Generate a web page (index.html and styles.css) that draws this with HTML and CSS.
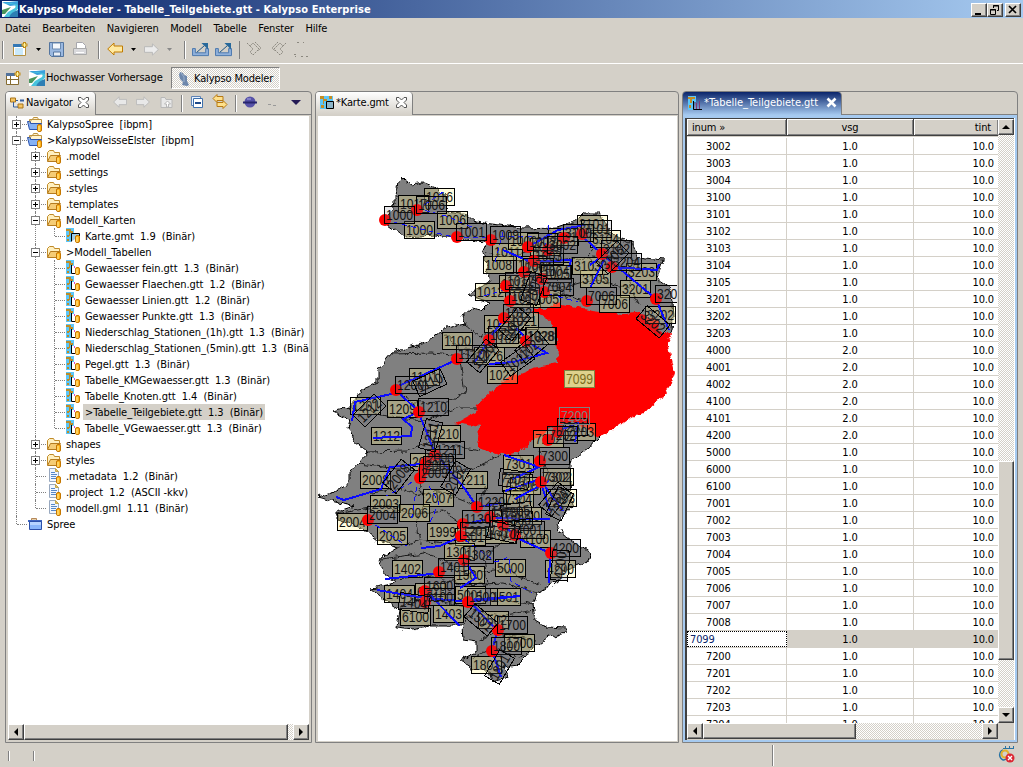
FILE: index.html
```html
<!DOCTYPE html>
<html lang="de">
<head>
<meta charset="utf-8">
<title>Kalypso Modeler - Tabelle_Teilgebiete.gtt - Kalypso Enterprise</title>
<link rel="stylesheet" href="styles.css">
</head>
<body>
<svg class="defs" width="0" height="0">
  <symbol id="kalypso" viewBox="0 0 16 16"><rect width="16" height="16" fill="#fff"/><path d="M0 1h7l9-1v4L8 5z" fill="#39a0dc"/><path d="M0 3l10 0q5 1 3 4l-7 4-4 5h5l4-4 5-4V4L9 2z" fill="#48c3dc"/><path d="M0 9l9-3-6 7H0z" fill="#49965c"/><path d="M7 16q2-5 9-7v7z" fill="#2e7fb4"/></symbol>
  <symbol id="folder" viewBox="0 0 16 16"><path d="M1.500 13V4.500l2-2h4l1 2h5V8" fill="#fff0c0" stroke="#c08a28"/><path d="M1.500 13.500l3-6h10l-3 6z" fill="#f5cc75" stroke="#b57b1e"/><rect x="10.500" y="8.500" width="4" height="7" rx="1.500" fill="#ffb31a" stroke="#c47600"/><path d="M12 10v5" stroke="#fff0a0"/></symbol>
  <symbol id="project" viewBox="0 0 16 16"><path d="M2.500 7V3.500h3l1-2h4l1 2h3V8" fill="#fff3d0" stroke="#bd933f"/><path d="M.500 5.500h3v2h11l-2 6h-10z" fill="#85b1f5" stroke="#2b53ae"/><path d="M2 6.500l3-3h9" stroke="#bd933f" fill="none"/><rect x="10.500" y="8.500" width="4" height="7" rx="1.500" fill="#ffb31a" stroke="#c47600"/><path d="M12 10v5" stroke="#fff0a0"/></symbol>
  <symbol id="closed" viewBox="0 0 16 16"><path d="M4.500 4V2.500h5V4" fill="#e8d0a8" stroke="#b5885a"/><path d="M1 4h14v2H1z" fill="#3f66c0"/><path d="M2.500 5.500h12v8h-12z" fill="#8ab6fa" stroke="#2c50aa"/><path d="M3 6h11v3H3z" fill="#b7d4ff"/></symbol>
  <symbol id="file" viewBox="0 0 16 16"><path d="M3.500.500h6l3 3v10h-9z" fill="#f1f6ff" stroke="#98a8bf"/><path d="M9.500.500v3h3z" fill="#e3c46d" stroke="#c5a64b"/><path d="M5 4.500h4M5 6.500h6M5 8.500h5M5 10.500h5" stroke="#5688c8"/><rect x="10.500" y="8.500" width="4" height="7" rx="1.500" fill="#ffb31a" stroke="#c47600"/><path d="M12 10v5" stroke="#fff0a0"/></symbol>
  <symbol id="gtt" viewBox="0 0 16 16"><path d="M1 0h8v6H6v8H1z" fill="#5bc6fa"/><path d="M1 1h5v2h2v2H5v3H4V3H1zM2 7h2v2H2zM2 11h2v2H2z" fill="#bd8d28"/><path d="M6.500 5v8.500H10" fill="none" stroke="#000"/><path d="M9.500 6v2" stroke="#e34cc0"/><rect x="10.500" y="7.500" width="4" height="7" rx="1.500" fill="#ffb31a" stroke="#c47600"/><path d="M12 9v5" stroke="#fff0a0"/></symbol>
  <symbol id="gmt" viewBox="0 0 16 16"><path d="M1 0h8v6H6v8H1z" fill="#5bc6fa"/><path d="M1 1h5v2h2v2H5v3H4V3H1zM2 7h2v2H2zM2 11h2v2H2z" fill="#bd8d28"/><path d="M6.500 13.500v-8h8V8" fill="#9dcbe8" stroke="#000"/><rect x="10.500" y="7.500" width="4" height="7" rx="1.500" fill="#ffb31a" stroke="#c47600"/><path d="M12 9v5" stroke="#fff0a0"/></symbol>
  <symbol id="x" viewBox="0 0 11 11"><path d="M.500.500h2.500l2.500 2.500L8 .500h2.500V3L8 5.500 10.500 8v2.500H8L5.500 8 3 10.500H.500V8L3 5.500.500 3z" fill="#fff" stroke="#555"/></symbol>
  <symbol id="xa" viewBox="0 0 11 11"><path d="M1.500 1.500l8 8M9.500 1.500l-8 8" stroke="#fff" stroke-width="2.600"/></symbol>
  <symbol id="left" viewBox="0 0 16 16"><path d="M.700 8l6.300-6v3h8.500v6H7v3z"/></symbol>
  <symbol id="launch" viewBox="0 0 20 16"><path d="M1.500 7v7.500h17V7h-3v4.500h-11V7z" fill="#8fb0da" stroke="#4775ad"/><path d="M6 11l8-7" stroke="#174f7e"/><path d="M11 1h7v7z" fill="#28699b"/></symbol>
  <symbol id="redo" viewBox="0 0 18 16"><path d="M1 2l3 3 3-3 6 6-6 6-3-3 3-3-4-4M9 1l6 6-3 3" fill="none" stroke="#8b887f" stroke-dasharray="2 1"/></symbol>
</svg>

<header class="title"><svg class="i16"><use href="#kalypso"/></svg><b>Kalypso Modeler - Tabelle_Teilgebiete.gtt - Kalypso Enterprise</b>
  <div class="winbtns">
    <span class="wb"><svg width="14" height="12"><path d="M3 9h6v2H3z"/></svg></span>
    <span class="wb"><svg width="14" height="12"><path d="M5.500 4V1.500h5v5H9M5 2h6M2.500 5.500h5v5h-5zM2 6h6" fill="none" stroke="#000"/></svg></span>
    <span class="wb close"><svg width="14" height="12"><path d="M3 2l7 7M10 2l-7 7" stroke="#000" stroke-width="1.700"/></svg></span>
  </div>
</header>
<nav class="menu"><span>Datei</span><span>Bearbeiten</span><span>Navigieren</span><span>Modell</span><span>Tabelle</span><span>Fenster</span><span>Hilfe</span></nav>

<div class="toolbar">
  <svg width="320" height="25">
    <path d="M2.500 3v18M98.500 3v18M184.500 3v18M239.500 3v18" stroke="#808080"/><path d="M3.500 3v18M99.500 3v18M185.500 3v18" stroke="#fff"/>
    <path d="M13.500 6.500h12v11h-12z" fill="#fff" stroke="#b59242"/><path d="M13 6h10v3H13z" fill="#3478b5"/><path d="M15 10h8v7h-8z" fill="#c9e9fb"/><path d="M24.500 4v6M21.500 7h6" stroke="#c08a18" stroke-width="3"/><path d="M24.500 5v4M22.500 7h4" stroke="#fff7a0"/>
    <path d="M36 10h5l-2.500 3zM131 10h5l-2.500 3z"/><path d="M167 10h5l-2.500 3z" fill="#888"/>
    <path d="M49.500 4.500h14v14h-12l-2-2z" fill="#9ab8e0" stroke="#54759f"/><path d="M52.500 5h8v6h-8z" fill="#f5f8fc" stroke="#6d8bb0"/><path d="M53.500 14h7v4h-7z" fill="#e8eef6" stroke="#54759f"/>
    <path d="M76.500 4.500h6l3 3v4h-9z" fill="#fff" stroke="#a6a6ac"/><path d="M73.500 10.500h13v6h-13z" fill="#d9d9dc" stroke="#aaa"/><path d="M76 14.500h8" stroke="#fff"/>
    <g fill="#ffe9a0" stroke="#c07b00"><use href="#left" x="107" y="3" width="16" height="16"/></g>
    <g fill="#ececec" stroke="#b8b8b8" transform="translate(159 4) scale(-1 1)"><use href="#left" width="15" height="15"/></g>
    <use href="#launch" x="191" y="4" width="19" height="15"/><use href="#launch" x="214" y="4" width="19" height="15"/>
    <use href="#redo" x="246" y="3" width="18" height="16"/><g transform="translate(287 3) scale(-1 1)"><use href="#redo" width="18" height="16"/></g>
    <path d="M297 4.500h2m4 0h1M294 16.500h2m5 2h2m3 0h2M295 18.500h1" stroke="#8b887f"/>
  </svg>
</div>
<div class="persp">
  <svg class="i16"><path d="M1.500 3.500h12v11h-12z" fill="#fff" stroke="#866c31"/><path d="M1 3h9v3H1z" fill="#52729b"/><path d="M5.500 6v8M1 9.500h12" stroke="#866c31"/><path d="M12.500 1v6M9.500 4h6" stroke="#c08a18" stroke-width="3"/><path d="M12.500 2v4M10.500 4h4" stroke="#fff7a0"/></svg>
  <svg class="i16 hw"><use href="#kalypso"/></svg><span class="hwt">Hochwasser Vorhersage</span>
  <div class="pbtn"><svg class="i16" viewBox="0 0 16 16"><path d="M3 1l3 1 1 2 3 1v5l2 4-2 1-5-1 1-3-3-3-1-4z" fill="#6d87ac"/><path d="M4 2l3 4v5" stroke="#9ab0cc" fill="none"/></svg><span>Kalypso Modeler</span></div>
</div>

<main class="work">
  <section class="panel nav">
    <div class="tabs">
      <div class="tab"><svg class="i16"><path d="M1.500 3h5v4h-5zM9 9h5v4H9z" fill="#f5c462" stroke="#a87419"/><path d="M4.500 7v5H9M7 5.500h2" fill="none" stroke="#355f9f"/><path d="M11 5.500h4" stroke="#355f9f" stroke-width="2"/></svg><span class="t-nav">Navigator</span><svg class="x"><use href="#x"/></svg></div>
      <svg class="navtools" width="215" height="22">
        <path d="M86.500 3v17M140.500 3v17" stroke="#808080"/><path d="M87.500 3v17M141.500 3v17" stroke="#fff"/>
        <g fill="#e8e8e8" stroke="#b8b8b8"><use href="#left" x="18" y="3" width="14" height="14"/><g transform="translate(55 3) scale(-1 1)"><use href="#left" width="14" height="14"/></g><path d="M66 5.500h4l1 2h6v8H66z"/><path d="M71.500 15v-3h-2l3-3 3 3h-2v3z" fill="#fff"/></g>
        <path d="M96.500 4.500h9v9h-9z" fill="#e9f3ff" stroke="#5f83b5"/><path d="M98.500 6.500h9v9h-9z" fill="#fff" stroke="#3e70ac"/><path d="M100 11h6" stroke="#1e4a8a" stroke-width="2"/>
        <g fill="#ffe08a" stroke="#b77a15"><path d="M118 6.500l4-4v2h6v4h-6v2zM132 12.500l-4-4v2h-6v4h6v2z"/></g>
        <circle cx="155" cy="10" r="5.500" fill="#5752a8"/><path d="M148 10.500h14" stroke="#27246d" stroke-width="2"/><path d="M152 7h4" stroke="#aaa7e5"/>
        <path d="M173 12.500h3m2 1h3" stroke="#999"/><path d="M196 8h10l-5 5z" fill="#241a55"/>
      </svg>
    </div>
    <div class="tree">
      <ul>
        <li><div class="r"><i class="e plus"></i><svg class="i16"><use href="#project"/></svg><span>KalypsoSpree&nbsp; [ibpm]</span></div></li>
        <li><div class="r"><i class="e"></i><svg class="i16"><use href="#project"/></svg><span>&gt;KalypsoWeisseElster&nbsp; [ibpm]</span></div>
          <ul>
            <li><div class="r"><i class="e plus"></i><svg class="i16"><use href="#folder"/></svg><span>.model</span></div></li>
            <li><div class="r"><i class="e plus"></i><svg class="i16"><use href="#folder"/></svg><span>.settings</span></div></li>
            <li><div class="r"><i class="e plus"></i><svg class="i16"><use href="#folder"/></svg><span>.styles</span></div></li>
            <li><div class="r"><i class="e plus"></i><svg class="i16"><use href="#folder"/></svg><span>.templates</span></div></li>
            <li><div class="r"><i class="e"></i><svg class="i16"><use href="#folder"/></svg><span>Modell_Karten</span></div>
              <ul><li><div class="r"><i class="n"></i><svg class="i16"><use href="#gmt"/></svg><span>Karte.gmt&nbsp; 1.9&nbsp; (Binär)</span></div></li></ul></li>
            <li><div class="r"><i class="e"></i><svg class="i16"><use href="#folder"/></svg><span>&gt;Modell_Tabellen</span></div>
              <ul>
                <li><div class="r"><i class="n"></i><svg class="i16"><use href="#gtt"/></svg><span>Gewaesser fein.gtt&nbsp; 1.3&nbsp; (Binär)</span></div></li>
                <li><div class="r"><i class="n"></i><svg class="i16"><use href="#gtt"/></svg><span>Gewaesser Flaechen.gtt&nbsp; 1.2&nbsp; (Binär)</span></div></li>
                <li><div class="r"><i class="n"></i><svg class="i16"><use href="#gtt"/></svg><span>Gewaesser Linien.gtt&nbsp; 1.2&nbsp; (Binär)</span></div></li>
                <li><div class="r"><i class="n"></i><svg class="i16"><use href="#gtt"/></svg><span>Gewaesser Punkte.gtt&nbsp; 1.3&nbsp; (Binär)</span></div></li>
                <li><div class="r"><i class="n"></i><svg class="i16"><use href="#gtt"/></svg><span>Niederschlag_Stationen_(1h).gtt&nbsp; 1.3&nbsp; (Binär)</span></div></li>
                <li><div class="r"><i class="n"></i><svg class="i16"><use href="#gtt"/></svg><span>Niederschlag_Stationen_(5min).gtt&nbsp; 1.3&nbsp; (Binär)</span></div></li>
                <li><div class="r"><i class="n"></i><svg class="i16"><use href="#gtt"/></svg><span>Pegel.gtt&nbsp; 1.3&nbsp; (Binär)</span></div></li>
                <li><div class="r"><i class="n"></i><svg class="i16"><use href="#gtt"/></svg><span>Tabelle_KMGewaesser.gtt&nbsp; 1.3&nbsp; (Binär)</span></div></li>
                <li><div class="r"><i class="n"></i><svg class="i16"><use href="#gtt"/></svg><span>Tabelle_Knoten.gtt&nbsp; 1.4&nbsp; (Binär)</span></div></li>
                <li><div class="r"><i class="n"></i><svg class="i16"><use href="#gtt"/></svg><span class="sel">&gt;Tabelle_Teilgebiete.gtt&nbsp; 1.3&nbsp; (Binär)</span></div></li>
                <li><div class="r"><i class="n"></i><svg class="i16"><use href="#gtt"/></svg><span>Tabelle_VGewaesser.gtt&nbsp; 1.3&nbsp; (Binär)</span></div></li>
              </ul></li>
            <li><div class="r"><i class="e plus"></i><svg class="i16"><use href="#folder"/></svg><span>shapes</span></div></li>
            <li><div class="r"><i class="e plus"></i><svg class="i16"><use href="#folder"/></svg><span>styles</span></div></li>
            <li><div class="r"><i class="n"></i><svg class="i16"><use href="#file"/></svg><span>.metadata&nbsp; 1.2&nbsp; (Binär)</span></div></li>
            <li><div class="r"><i class="n"></i><svg class="i16"><use href="#file"/></svg><span>.project&nbsp; 1.2&nbsp; (ASCII -kkv)</span></div></li>
            <li><div class="r"><i class="n"></i><svg class="i16"><use href="#file"/></svg><span>modell.gml&nbsp; 1.11&nbsp; (Binär)</span></div></li>
          </ul></li>
        <li><div class="r"><i class="n"></i><svg class="i16"><use href="#closed"/></svg><span>Spree</span></div></li>
      </ul>
    </div>
    <div class="hs"><span class="sb"><svg width="8" height="8"><path d="M6 0v8L2 4z"/></svg></span><span class="thumb"></span><span class="sb"><svg width="8" height="8"><path d="M2 0v8l4-4z"/></svg></span></div>
  </section>

  <section class="panel map">
    <div class="tabs">
      <div class="tab"><svg class="i16"><path d="M1 1h13v13H1z" fill="#5bc6fa"/><path d="M1 1h4v3h3v2H5v3H4V4H1zM2 10h3v3H2zM10 1h3v3h-3z" fill="#c48c22"/><path d="M7.500 6.500h7v7h-7z" fill="#8db5c9" stroke="#000"/></svg><span class="t-map">*Karte.gmt</span><svg class="x"><use href="#x"/></svg></div>
    </div>
    <svg id="map" class="canvas" viewBox="318 116 359 625">
      <defs><filter id="rough" x="-5%" y="-5%" width="110%" height="110%"><feTurbulence type="fractalNoise" baseFrequency=".13" numOctaves="3" seed="4"/><feDisplacementMap in="SourceGraphic" scale="7" xChannelSelector="R" yChannelSelector="G"/></filter></defs>
      <g filter="url(#rough)">
        <path class="land" d="M395 195L398 182 402 177 405 180 412 185 422 183 435 188 445 195 448 212 467 215 475 222 500 225 523 228 557 227 578 220 585 213 600 213 610 232 632 243 637 257 663 260 657 278 670 288 672 302 673 318 672 330 640 370 600 437 595 442 570 463 570 483 572 507 557 523 561 533 590 553 587 562 567 570 553 583 537 593 533 605 535 620 547 627 567 628 565 633 547 638 533 647 525 657 517 665 503 667 508 677 493 682 490 670 473 670 460 660 477 652 477 642 463 640 462 625 430 625 413 630 397 628 400 610 385 600 370 588 387 585 397 582 387 577 380 567 382 557 397 548 377 540 360 527 337 520 337 512 355 506 330 500 318 497 335 492 350 483 350 472 358 463 368 452 355 442 348 427 350 420 333 412 350 407 362 390 378 383 378 370 392 353 425 343 442 332 445 327 465 323 462 315 472 308 482 310 490 302 467 295 478 288 490 282 488 272 483 252 487 243 475 242 455 237 435 235 405 237 388 225 382 220 395 205z"/>
        <path class="edge" d="M392 354l40-1 30 3 38-8M460 360l5 33-17 9-34 1-18-14M350 407l40 10 35 4 35-13 17 0M368 452l40-1 22-9 50 8M359 464l48 6 20-12 22 15 22-4 30-14M366 494l36-6 14 8 22-5 39 15 10-20M337 514l43-8 38 8 24-4 22 16M397 548l22-8 35 4 24-15 30 8 39 1M382 559l42-6 22 8 20 13 35-5 40 16M395 580l38-4 30 9 40-2 34 10M400 606l32-8 29 8 38-7 35 6M420 545l-3-26 8-16-7-25 10-22M463 625l11-14 26 5 35-6M477 642l18-10 40 8M470 659l20-10 33 8M442 332l20 18 25 0 20-15M464 323l16 14 28-9M483 252l22 5 34-8 20 12 32-5 48 3M500 283l33-7 25 13 32-9 40 8M503 300l26 5 30-12 30 10M547 228l15 20-7 30 12 21M610 232l-23 22 12 22 15 10M637 257l-10 22 12 25M520 452l8 24-8 27 18 17M540 450l10 30 16 18M495 500l14 15-5 25-20 16 3 28"/>
        <path class="sel-area" d="M533 307L545 310 557 303 593 310 623 314 637 313 657 320 660 332 672 332 667 342 673 368 674 373 670 385 660 400 647 410 627 420 617 427 600 437 590 432 573 422 553 427 533 440 520 452 503 455 478 448 480 427 455 423 475 412 477 405 493 390 510 377 533 368 557 363 558 348 555 328 545 317 533 312z"/>
      </g>
      <g class="labels" id="area-labels"></g>
      <g class="river"><path d="M396 393l-41 9-3 19M394 388l60-27M397 391l22 21-16 7 9 8-1 9-38 2M420 416l15 37 30 36 12 18 24-4M421 464l-31 3-9 22-37 11-8-3M489 364l24-2 34-9-16-9-15-16M528 247l30-17 27-5M583 237l20 18 53 44 13 31M612 267l45 3 2-6M590 265l18-13-18 36M503 250l28 12 40-2-2 7M462 536l-22 10-19 2M465 524l27-6 42 1 16 0M503 525l16 14 31 14-1 30M464 559l12 19-16 10M385 579l55-6M377 590l48 8 48 4M426 591l34 35M468 602l52-6-52 4 30 31M498 630l-6 20 9 27M541 481l22 30M504 455l35 12-26 12M505 491l35-12M515 499l34-18M540 480l10 31M558 431l20-8-3 19M489 340l-14 22M505 318l-21 27"/><path class="dash" d="M385 220l72 18 80-2M416 208l30 8 28 12M417 210l26-18M420 478l-34 18M418 478l-7 45M424 478l15 25-10 21M368 520l39 26M465 540l31 22 13-5 2 24 21 12M484 296l30-9M495 262l8-30M541 292l37 10M549 225l-4 24"/></g>
      <g class="nodes"></g>
      <g class="labels" id="node-labels"></g>
    </svg>
  </section>

  <section class="panel tbl">
    <div class="tabs"><div class="tab active"><svg class="i16"><path d="M2 1h8v6H7v8H2z" fill="#5bc6fa"/><path d="M2 2h7v2H6v4H4V4H2zM3 10h2v3H3z" fill="#c48c22"/><path d="M7.500 6v8.500H16" stroke="#000" fill="none"/><path d="M10.500 8v6M13.500 6v8" stroke="#803878"/></svg><span class="t-tab">*Tabelle_Teilgebiete.gtt</span><svg class="x"><use href="#xa"/></svg></div></div>
    <div class="frame"><div class="grid">
      <div class="rows">
        <div class="row head"><span>inum »</span><span>vsg</span><span>tint</span></div>
        <div class="body" id="rows"></div>
        <div class="hs"><span class="sb"><svg width="8" height="8"><path d="M6 0v8L2 4z"/></svg></span><span class="thumb"></span><span class="track"></span><span class="sb"><svg width="8" height="8"><path d="M2 0v8l4-4z"/></svg></span></div>
      </div>
      <div class="vs"><span class="sb"><svg width="8" height="8"><path d="M0 6h8L4 2z"/></svg></span><span class="track"></span><span class="thumb"></span><span class="track low"></span><span class="sb"><svg width="8" height="8"><path d="M0 2h8L4 6z"/></svg></span><span class="corner"></span></div>
    </div></div>
  </section>
</main>
<footer class="status"><i></i><i class="b"></i><i class="c"></i><svg width="18" height="18"><path d="M5 2.500h10M7.500 0v3M11.500 0v3M15.500 0v3" stroke="#2873a4"/><path d="M5 4a4 5 0 1 0 3 9" fill="none" stroke="#2873a4" stroke-width="1.500"/><circle cx="7" cy="8" r="3.500" fill="none" stroke="#e3b22d" stroke-width="2"/><circle cx="12" cy="12" r="4.500" fill="#dc2733"/><path d="M10 10l4 4m0-4l-4 4" stroke="#fff" stroke-width="1.400"/></svg></footer>
<script src="app.js"></script>
</body>
</html>
```

FILE: styles.css
```css
* { box-sizing: border-box; }
body { margin: 0; width: 1023px; height: 767px; overflow: hidden; background: #d4d0c8; display: flex; flex-direction: column; font: 11px/16px "DejaVu Sans Condensed", "DejaVu Sans", sans-serif; font-stretch: condensed; letter-spacing: -.15px; color: #000; white-space: nowrap; }
svg { display: block; flex: none; }
.defs { position: absolute; }
.i16 { width: 16px; height: 16px; }
.title { height: 18px; flex: none; display: flex; align-items: center; padding: 0 2px; background: linear-gradient(90deg, #0a246a, #a6caf0); color: #fff; }
.title b { margin-left: 1px; padding-top: 1px; letter-spacing: .09px; }
.winbtns { margin-left: auto; display: flex; padding-top: 1px; }
.wb { width: 16px; height: 14px; background: #d4d0c8; border: 1px solid; border-color: #fff #404040 #404040 #fff; box-shadow: inset -1px -1px #808080; }
.wb.close { margin-left: 2px; }
.menu { height: 20px; flex: none; display: flex; align-items: center; gap: 11.600px; padding: 1px 0 0 5px; }
.toolbar { height: 26px; flex: none; border-bottom: 1px solid #fff; }
.persp { height: 27px; flex: none; display: flex; align-items: center; padding: 0 0 0 5px; }
.hw { margin-left: 8px; }
.hwt { margin-left: 1px; width: 125px; letter-spacing: -.1px; }
.pbtn { height: 22px; width: 109px; margin-top: 1px; display: flex; align-items: center; padding: 2px 0 0 5px; border: 1px solid; border-color: #808080 #fff #fff #808080; background: repeating-conic-gradient(#fff 0 25%, #d4d0c8 0 50%) 0 0 / 2px 2px; }
.pbtn span { padding-left: 1px; }
.work { height: 652px; flex: none; display: flex; gap: 3px; padding: 0 4px 0 5px; }
.panel { border: 1px solid #808080; border-radius: 4px 4px 0 0; display: flex; flex-direction: column; overflow: hidden; min-width: 0; }
.nav { width: 307px; padding: 0 2px 2px; }
.map { width: 364px; padding: 0 2px 1px; }
.tbl { width: 336px; }
.tabs { height: 23px; flex: none; display: flex; margin: 0 -2px; border-bottom: 1px solid #808080; }
.tab { height: 23px; display: flex; align-items: center; padding: 0 4px 1px 3px; border-right: 1px solid #808080; border-radius: 0 4px 0 0; background: linear-gradient(#fff, #d4d0c8); }
.tab .x { width: 11px; height: 11px; margin-top: -1px; }
.nav .tab { width: 90px; }
.t-nav { width: 52px; margin-left: 1px; letter-spacing: -.2px; }
.map .tab { width: 97px; }
.t-map { width: 60px; margin-left: 1px; }
.navtools { margin-left: -1px; }
.tree { flex: 1; margin-top: 1px; background: #fff; overflow: hidden; }
.tree ul { list-style: none; margin: 0; padding: 0; }
.tree ul ul { margin-left: 19px; }
.tree li { position: relative; }
.tree li::before { content: ""; position: absolute; left: 8px; top: 0; bottom: 0; border-left: 1px dotted #808080; }
.tree li:last-child::before { bottom: auto; height: 8px; }
.r { position: relative; height: 16px; display: flex; align-items: center; padding-left: 4px; }
.r::before { content: ""; position: absolute; left: 9px; width: 10px; top: 8px; border-top: 1px dotted #808080; }
.e, .n { width: 9px; height: 9px; flex: none; margin-right: 6px; position: relative; }
.e { border: 1px solid #808080; background: linear-gradient(#000, #000) center / 5px 1px no-repeat #fff; }
.e.plus { background: linear-gradient(#000, #000) center / 5px 1px no-repeat, linear-gradient(#000, #000) center / 1px 5px no-repeat #fff; }
.r span { padding: 0 2px; margin-left: 2px; height: 16px; line-height: 18px; letter-spacing: -.05px; }
.r .sel { background: #d4d0c8; }
.hs { height: 16px; flex: none; display: flex; background: repeating-conic-gradient(#fff 0 25%, #d4d0c8 0 50%) 0 0 / 2px 2px; }
.sb, .thumb { background: #d4d0c8; border: 1px solid; border-color: #fff #404040 #404040 #fff; box-shadow: inset -1px -1px #808080; }
.sb { width: 16px; height: 16px; flex: none; display: flex; align-items: center; justify-content: center; }
.nav .thumb { width: 264px; }
.nav .hs .sb:last-child { margin-left: auto; }
.canvas { width: 359px; height: 625px; margin-top: 1px; background: #fff; }
.land { fill: #808080; stroke: #000; }
.edge { fill: none; stroke: #000; stroke-width: .8; }
.sel-area { fill: #f00; }
.river { fill: none; stroke: #0a0aff; stroke-width: 2; shape-rendering: crispEdges; }
.dash { stroke-width: 1; stroke-dasharray: 5 4; }
.nodes circle { fill: #f00; }
.labels { font: 14.500px "Liberation Sans", sans-serif; letter-spacing: 0; shape-rendering: crispEdges; }
.labels rect { stroke: #000; }
.area rect { fill: rgba(255, 244, 150, .3); }
.knot rect { fill: rgba(120, 120, 140, .18); }
.area text, .knot text { fill: #111; }
.picked rect { fill: #ded28c; stroke: #808040; }
.picked text { fill: #7b6c1c; }
.hidden rect { fill: none; stroke: #808080; }
.hidden text { fill: #808080; }
.tab.active { width: 159px; background: linear-gradient(#0a246a, #a6caf0); color: #fff; }
.t-tab { width: 122px; margin-left: 2px; letter-spacing: -.02px; }
.tbl .tabs { margin: 0; }
.frame { flex: 1; min-height: 0; background: #fff; border: 2px solid #a6caf0; border-top-width: 3px; padding: 0 1px 1px 0; }
.grid { height: 622px; display: flex; border-left: 2px solid #404040; border-top: 1px solid #404040; background: #d4d0c8; }
.rows { width: 311px; display: flex; flex-direction: column; }
.row { height: 17px; flex: none; display: grid; grid-template-columns: 100px 127px 84px; border-bottom: 1px solid #d4d0c8; }
.row span { border-right: 1px solid #d4d0c8; text-align: center; line-height: 18px; height: 16px; letter-spacing: -.15px; }
.row span:first-child { text-align: left; padding-left: 19px; }
.row span:last-child { text-align: right; padding-right: 4px; border-right: 0; }
.head { height: 17px; background: #d4d0c8; border-bottom: 1px solid #404040; }
.head span { border-right: 1px solid #404040; box-shadow: inset 1px 1px #fff, inset -1px -1px #808080; }
.row.head span:first-child { padding-left: 5px; }
.row.head span:last-child { padding-right: 7px; }
.body { height: 587px; padding-top: 1px; background: #fff; overflow: hidden; border-top: 1px solid #d4d0c8; }
.row.on { background: #d4d0c8; }
.row.on span:first-child { background: #fff; border: 1px dotted #000; color: #0a246a; padding-left: 2px; line-height: 15px; }
.tbl .hs .thumb { width: 153px; }
.tbl .hs .track { flex: 1; }
.vs { width: 16px; height: 621px; display: flex; flex-direction: column; background: repeating-conic-gradient(#fff 0 25%, #d4d0c8 0 50%) 0 0 / 2px 2px; }
.vs .track { height: 326px; }
.vs .thumb { height: 199px; }
.vs .low { height: 47px; }
.corner { flex: 1; background: #d4d0c8; }
.status { flex: 1; display: flex; align-items: center; padding-left: 8px; }
.status i { width: 2px; height: 10px; border-left: 1px solid #808080; border-right: 1px solid #fff; margin-right: 23px; margin-top: 1px; }
.status .c { height: 21px; margin-left: 714px; margin-right: 224px; }
```

FILE: app.js
```js
const SVG = 'http://www.w3.org/2000/svg';
const map = document.getElementById('map');

function add(parent, tag, attrs, text) {
  const el = document.createElementNS(SVG, tag);
  for (const k in attrs) el.setAttribute(k, attrs[k]);
  if (text) el.textContent = text;
  parent.appendChild(el);
  return el;
}

// x, y and number of each river node
const nodes = [
  [385,220,1000],[417,210,1006],[457,237,1001],[491,240,1009],[528,247,1002],[582,234,3101],[602,254,3102],[612,267,3204],
  [534,261,1003],[524,272,1004],[506,286,1012],[542,279,1005],[544,292,7004],[510,301,1020],[656,299,3200],[587,301,7006],
  [564,238,3100],[548,250,3002],[526,341,1028],[504,318,1022],[489,340,1024],[457,359,1110],[396,390,1200],[419,412,1210],
  [435,455,1211],[426,463,2000],[424,470,2001],[420,478,2009],[477,507,1220],[490,517,1300],[368,520,2004],[558,432,7201],
  [548,440,7202],[540,461,7300],[541,482,7302],[503,525,1800],[515,535,4001],[463,524,1130],[461,536,1201],[464,560,1302],
  [439,572,1401],[425,591,1600],[425,602,6100],[468,602,1500],[498,630,1700],[492,651,1800],[551,553,4200]
];
// top left corner and number of each sub-catchment
const areas = [
  [424,188,1016],[398,195,1017],[404,221,1000],[437,211,1006],[483,256,1008],[475,283,1012],[442,332,1100],[492,243,1011],
  [508,232,1002],[530,238,1003],[548,228,3001],[516,256,1004],[540,262,3004],[577,215,3101],[590,230,3104],[626,263,3203],
  [580,270,3105],[572,257,3103],[620,280,3201],[599,295,7006],[645,306,3202],[510,290,1019],[530,290,7005],[499,275,1018],
  [484,315,1023],[508,312,1021],[526,327,1028],[496,330,1025],[474,347,1026],[487,366,1027],[409,368,1101],[350,397,1201],
  [387,400,1209],[371,427,1212],[430,425,1210],[410,453,2001],[423,489,2007],[457,471,1211],[360,471,2008],[370,495,2003],
  [399,504,2006],[337,513,2004],[377,527,2005],[533,430,7202],[565,423,7203],[503,455,7301],[502,474,7303],[503,490,7304],
  [546,489,7303],[543,468,7302],[427,523,1999],[455,528,1301],[485,526,4001],[511,507,4000],[520,530,4100],[444,543,1301],
  [495,559,5000],[392,560,1402],[545,560,4200],[454,566,1500],[384,585,1404],[415,583,6001],[400,608,6100],[433,605,1403],
  [455,586,5001],[490,588,1501],[478,611,1502],[504,634,1700],[471,656,1801],[510,477,1305],[492,509,1230]
];

const nodeLayer = map.querySelector('.nodes');
const areaLayer = document.getElementById('area-labels');
const labelLayer = document.getElementById('node-labels');

function label(x, y, text, cls, turn) {
  const g = add(cls === 'area' ? areaLayer : labelLayer, 'g', { class: cls });
  if (turn) g.setAttribute('transform', `rotate(${turn} ${x} ${y})`);
  add(g, 'rect', { x: x + .5, y: y + .5, width: 30, height: 17 });
  add(g, 'text', { x: x + 2, y: y + 14, textLength: 27, lengthAdjust: 'spacingAndGlyphs' }, text);
}

areas.forEach(([x, y, n]) => label(x, y, n, 'area'));
nodes.forEach(([x, y, n]) => {
  add(nodeLayer, 'circle', { cx: x, cy: y, r: 6 });
  label(x - 1, y - 14, n, 'knot');
});
// labels that follow the direction of a river reach
[[412,381,1110,-25],[352,415,1212,-45],[382,483,2008,-52],[466,362,1120,-50],[500,362,1027,-35],[514,350,1029,-40],
 [418,448,1211,-75],[440,487,2002,-60],[475,603,1501,40],[484,676,1801,-60],[538,505,7303,-50],[545,514,7304,-65],
 [550,580,4200,-85],[500,468,7301,8],[500,505,7305,-8],[647,305,3202,40],[490,520,1310,12],[400,592,1404,8],
 [595,262,3105,-45],[520,300,7005,-70],[498,330,1022,-50]
].forEach(([x, y, n, a]) => label(x, y, n, 'knot', a));
label(564, 370, '7099', 'picked');
label(559, 407, '7200', 'hidden');

const ids = [3002,3003,3004,3100,3101,3102,3103,3104,3105,3201,3202,3203,4000,4001,4002,4100,4101,4200,5000,6000,6100,
  7001,7002,7003,7004,7005,7006,7007,7008,7099,7200,7201,7202,7203,7204];
document.getElementById('rows').innerHTML = ids.map(id =>
  `<div class="row${id === 7099 ? ' on' : ''}"><span>${id}</span><span>${id >= 4000 && id < 4999 ? '2.0' : '1.0'}</span><span>10.0</span></div>`
).join('');
```
